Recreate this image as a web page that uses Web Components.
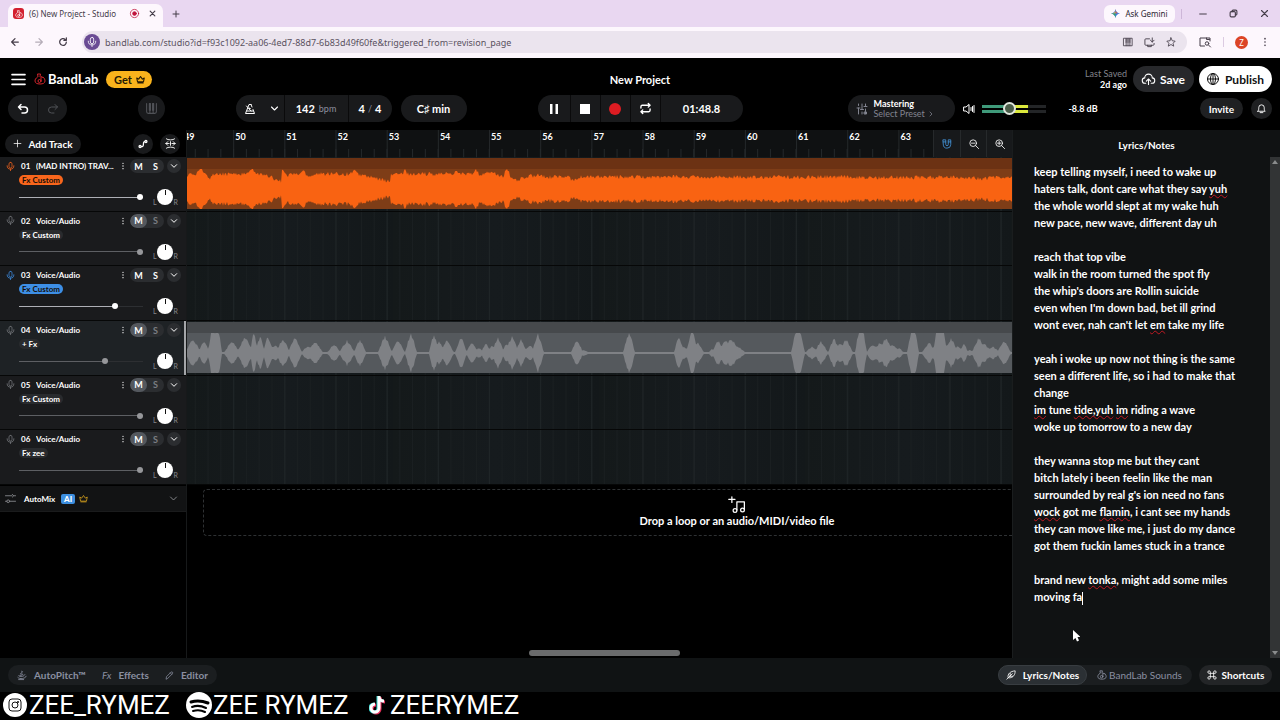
<!DOCTYPE html>
<html lang="en">
<head>
<meta charset="utf-8">
<title>(6) New Project - Studio</title>
<meta name="viewport" content="width=device-width, initial-scale=1">
<style>
  html { background: #000; }
  body { margin: 0; min-height: 100vh; display: flex; flex-direction: column; background: #000; color: #fff;
    font-family: Lato, "Liberation Sans", sans-serif; font-size: 10px; }
  studio-workspace { flex: 1; }
</style>
</head>
<body>
<browser-chrome></browser-chrome>
<studio-header></studio-header>
<studio-workspace></studio-workspace>
<studio-footer></studio-footer>
<social-bar></social-bar>

<script>
const RESET = `<style>
  *, *::before, *::after { box-sizing: border-box; }
  button { font: inherit; color: inherit; background: none; border: 0; padding: 0; margin: 0; display: inline-flex; align-items: center; justify-content: center; white-space: nowrap; }
  a { color: inherit; text-decoration: none; }
  h1, h2, p { margin: 0; font: inherit; }
  input { font: inherit; color: inherit; margin: 0; }
</style>`;

function define(name, html, setup) {
  const template = document.createElement('template');
  customElements.define(name, class extends HTMLElement {
    connectedCallback() {
      if (this.shadowRoot) return;
      template.innerHTML = RESET + (typeof html === 'function' ? html(this) : html);
      this.attachShadow({ mode: 'open' }).append(template.content.cloneNode(true));
      if (setup) setup(this);
    }
  });
}

const ICONS = {
  back: '<path d="M20 12H4m8-8-8 8 8 8"/>',
  forward: '<path d="M4 12h16m-8-8 8 8-8 8"/>',
  reload: '<path d="M20 12a8 8 0 1 1-2.500-5.800M20 2v6h-6"/>',
  mic: '<rect x="8" y="1" width="8" height="15" rx="4"/><path d="M3 10c0 6 3 9 9 9s9-3 9-9M12 19v4"/>',
  close: '<path d="M4 4l16 16M20 4 4 20"/>',
  plus: '<path d="M12 3v18M3 12h18"/>',
  minus: '<path d="M2 12h20"/>',
  restore: '<rect x="3" y="7" width="14" height="14" rx="3"/><path d="M8 7V6a3 3 0 0 1 3-3h7a3 3 0 0 1 3 3v7a3 3 0 0 1-3 3h-1"/>',
  recording: '<circle cx="12" cy="12" r="11"/><circle cx="12" cy="12" r="5" fill="currentColor"/>',
  gemini: '<path d="M12 0Q13.500 10.500 24 12 13.500 13.500 12 24 10.500 13.500 0 12 10.500 10.500 12 0Z" fill="#3b7de9" stroke="none"/><path d="M12 0Q13 10 19 11L12 12Z" fill="#e5533d" stroke="none"/><path d="M0 12Q10 11 11 5L12 12Z" fill="#e9b93b" stroke="none"/><path d="M0 12Q10 13 12 24V12Z" fill="#36a567" stroke="none"/>',
  pianobox: '<rect x="2" y="3" width="20" height="18"/><path d="M7.500 14v7M16.500 14v7M12 14v7"/><path d="M6 3h3v11H6zM10.500 3h3v11h-3zM15 3h3v11h-3z" fill="currentColor" stroke="none"/>',
  install: '<path d="M12 4H4a2 2 0 0 0-2 2v10a2 2 0 0 0 2 2h16a2 2 0 0 0 2-2v-2M8 18v3h8v-3M18 2v9m-4-4 4 4 4-4"/>',
  star: '<path d="m12 2 3 7 7 1-5 5 1.500 7L12 18l-6.500 4L7 15l-5-5 7-1z"/>',
  sidesearch: '<path d="M11 20H2V4h20v6"/><circle cx="16" cy="15" r="3.500"/><path d="m19 18 4 4M15 4v3h6"/>',
  kebab: '<g fill="currentColor" stroke="none"><circle cx="12" cy="4" r="2"/><circle cx="12" cy="12" r="2"/><circle cx="12" cy="20" r="2"/></g>',
  menu: '<path d="M0 3h24M0 12h24M0 21h24"/>',
  bandlab: '<path d="M8 7 7 2h6l-1 5M7 8C3 11 2 13 2 16c0 4 4 6 10 6s10-2 10-6c0-3-1-5-4-8"/><circle cx="11" cy="16" r="3"/><path d="M14 16V7l3 2"/>',
  crown: '<path d="m4 18-2-10 5 3 5-7 5 7 5-3-2 10zM5 21h14"/>',
  undo: '<path d="M8 3 3 8l5 5M3 8h12a6 6 0 0 1 0 12h-5"/>',
  redo: '<path d="m16 3 5 5-5 5M21 8H9a6 6 0 0 0 0 12h5"/>',
  piano: '<path d="M3 3v15a3 3 0 0 0 3 3h12a3 3 0 0 0 3-3V3M9 3v12M15 3v12M9 15v6M15 15v6"/><path d="M8 3h2v12H8zM14 3h2v12h-2z"/>',
  metronome: '<path d="M14 3h-4L3 21h18l-3-8M6 16h12M5 6l9 10M14 3l2 5"/><circle cx="11" cy="11" r="1"/>',
  chevron: '<path d="m4 8 8 8 8-8"/>',
  chevright: '<path d="m8 4 8 8-8 8"/>',
  pause: '<path d="M4 2h5v20H4zM15 2h5v20h-5z" fill="currentColor" stroke="none"/>',
  stop: '<path d="M2 2h20v20H2z" fill="currentColor" stroke="none"/>',
  record: '<circle cx="12" cy="12" r="12" fill="currentColor" stroke="none"/>',
  loop: '<path d="M2 11V8a3 3 0 0 1 3-3h17m-4-4 4 4-4 4M22 13v3a3 3 0 0 1-3 3H2m4 4-4-4 4-4"/>',
  faders: '<path d="M5 2v3M5 10v12M12 2v11M12 18v4M19 2v5M19 12v5M2 10h6M9 13h6M16 7h6"/><path d="M17 18h4v4h-4z" fill="currentColor"/>',
  speaker: '<path d="M2 8h4l6-5v18l-6-5H2zM16 9v6M19 7v10M22 5v14"/>',
  cloud: '<path d="M7 19H6a5 5 0 0 1-1-10 7 7 0 0 1 14 0 5 5 0 0 1-1 10h-1M12 21V11m-4 4 4-4 4 4"/>',
  globe: '<circle cx="12" cy="12" r="11"/><ellipse cx="12" cy="12" rx="5" ry="11"/><path d="M1 12h22M12 1v22"/>',
  bell: '<path d="M4 18h16c-2-2-2-4-2-8a6 6 0 0 0-12 0c0 4 0 6-2 8zM9 21h6"/>',
  automation: '<circle cx="5" cy="18" r="2.500"/><circle cx="19" cy="6" r="2.500"/><path d="M8 18h2c6 0 0-12 6-12"/>',
  fit: '<path d="M3 2c3 3 15 3 18 0M3 22c3-3 15-3 18 0M2 12h7M15 12h7M6 8l-4 4 4 4M18 8l4 4-4 4M12 8v8"/>',
  magnet: '<path d="M3 2h6v11a3 3 0 0 0 6 0V2h6v11a9 9 0 0 1-18 0zM3 7h6M15 7h6"/>',
  zoomout: '<circle cx="10" cy="10" r="8"/><path d="m16 16 7 7M6 10h8"/>',
  zoomin: '<circle cx="10" cy="10" r="8"/><path d="m16 16 7 7M6 10h8M10 6v8"/>',
  automix: '<path d="M1 6h14M19 6h4M1 18h3M10 18h13M16 3l3 3-3 3"/><circle cx="7" cy="18" r="3"/>',
  drop: '<path d="M3-2v9M-2 2h10M11 19V6h12v12"/><circle cx="8" cy="20" r="3"/><circle cx="20" cy="19" r="3"/>',
  autopitch: '<path d="M11 3c4 0 3 3 0 3M8 9c9 0 8 3-1 4M4 14c3 4 15 1 15-3M2 18c4 5 19 3 20-3M4 23h12"/>',
  pencil: '<path d="M3 21l1-6L16 3c3-2 6 1 4 4L8 19zM14 5l4 4"/>',
  feather: '<path d="M2 22 15 9M5 18C3 9 11 3 22 2c0 9-4 17-15 17M10 14V8M9 15h7"/>',
  command: '<path d="M8 8V5a3 3 0 1 0-3 3h14a3 3 0 1 0-3-3v14a3 3 0 1 0 3-3H5a3 3 0 1 0 3 3z"/>',
};
define('ui-icon', el => `<style>
  :host { display: block; flex: none; width: var(--size, 12px); height: var(--size, 12px); }
  svg { display: block; width: 100%; height: 100%; overflow: visible; fill: none; stroke: currentColor; stroke-width: ${el.getAttribute('weight') || 2}; stroke-linecap: round; stroke-linejoin: round; }
</style><svg viewBox="0 0 24 24" aria-hidden="true">${ICONS[el.getAttribute('name')]}</svg>`);

define('browser-chrome', `<style>
  :host { display: block; font-family: "Noto Sans", "Open Sans", sans-serif; color: #453d49; font-size: 8px; }
  .tabs { height: 27px; background: #e9d7f1; display: flex; align-items: flex-end; padding-left: 8px; }
  .tab { width: 155px; height: 23px; background: #fdf7fd; border-radius: 7px 7px 0 0; display: flex; align-items: center; padding: 0 7px 4px 5px; gap: 5px; }
  .fav { width: 11px; height: 11px; border-radius: 3px; background: #d3202f; color: #fff; display: grid; place-items: center; }
  .tab span.t { flex: 1; white-space: nowrap; }
  .rec { color: #c0143c; }
  .new { margin: 0 0 9px 9px; }
  .win { margin-left: auto; align-self: stretch; display: flex; align-items: center; padding-right: 11px; }
  .gem { height: 18px; width: 71px; border-radius: 6px; background: #fdf7fd; gap: 5px; color: #2b2630; }
  .win i { width: 1px; height: 10px; background: #cdb6d8; margin: 0 17px 0 6px; }
  .win .ctl { margin-right: 22px; }
  .win .ctl:last-child { margin: 0; }
  .bar { height: 31px; background: #fdf7fd; display: flex; align-items: center; padding: 0 10px 1px; }
  .nav { margin-right: 14px; }
  .fade { color: #b5adb8; }
  .omni { flex: 1; height: 22px; border-radius: 11px; background: #ebe4ee; display: flex; align-items: center; padding-right: 11px; gap: 11px; }
  .site { width: 16px; height: 16px; border-radius: 50%; background: #6a4b94; color: #fff; display: grid; place-items: center; margin-left: 2px; }
  .omni input { flex: 1; min-width: 0; border: 0; background: none; padding: 0; margin-left: -6px; outline: 0; font-size: 9px; color: #5a525f; }
  .ext { margin-left: 12px; }
  .bar i { width: 1px; height: 10px; background: #dccbe2; margin: 0 11px 0 12px; }
  .user { width: 13px; height: 13px; border-radius: 50%; background: #dc4426; color: #fff; margin-right: 12px; }
</style>
<div class="tabs">
  <div class="tab"><span class="fav"><ui-icon name="bandlab" style="--size:8px"></ui-icon></span><span class="t">(6) New Project - Studio</span>
    <ui-icon class="rec" name="recording" style="--size:9px"></ui-icon><button aria-label="Close tab" style="margin-left:5px"><ui-icon name="close" weight="4" style="--size:7px"></ui-icon></button></div>
  <button class="new" aria-label="New tab"><ui-icon name="plus" weight="3" style="--size:8px"></ui-icon></button>
  <div class="win"><button class="gem"><ui-icon name="gemini" style="--size:9px"></ui-icon>Ask Gemini</button><i></i>
    <button class="ctl" aria-label="Minimise"><ui-icon name="minus" weight="3" style="--size:8px"></ui-icon></button>
    <button class="ctl" aria-label="Restore"><ui-icon name="restore" weight="3" style="--size:9px"></ui-icon></button>
    <button class="ctl" aria-label="Close"><ui-icon name="close" weight="3" style="--size:9px"></ui-icon></button></div>
</div>
<div class="bar">
  <button class="nav" aria-label="Back"><ui-icon name="back" weight="3" style="--size:10px"></ui-icon></button>
  <button class="nav fade" aria-label="Forward"><ui-icon name="forward" weight="3" style="--size:10px"></ui-icon></button>
  <button class="nav" aria-label="Reload"><ui-icon name="reload" weight="3" style="--size:10px"></ui-icon></button>
  <div class="omni"><span class="site"><ui-icon name="mic" style="--size:10px"></ui-icon></span>
    <input aria-label="Address" value="bandlab.com/studio?id=f93c1092-aa06-4ed7-88d7-6b83d49f60fe&amp;triggered_from=revision_page">
    <ui-icon name="pianobox" style="--size:10px"></ui-icon><ui-icon name="install" style="--size:11px"></ui-icon><ui-icon name="star" style="--size:10px"></ui-icon></div>
  <button class="ext" aria-label="Side panel"><ui-icon name="sidesearch" style="--size:12px"></ui-icon></button><i></i>
  <button class="user">Z</button><button aria-label="More"><ui-icon name="kebab" style="--size:10px"></ui-icon></button>
</div>`);

define('studio-header', `<style>
  :host { display: block; padding: 8px 8px; background: #000; font-weight: 700; }
  .top, .tools { display: grid; grid-template-columns: 1fr auto 1fr; align-items: center; height: 26px; }
  .tools { height: 27px; margin-top: 3px; }
  .side { display: flex; align-items: center; min-width: 0; }
  .brand { display: flex; align-items: center; gap: 2px; font-size: 13px; margin-left: 9px; }
  .brand ui-icon { color: #d0252c; }
  .get { height: 17px; width: 46px; border-radius: 9px; background: #f9b31c; color: #241a04; gap: 4px; margin-left: 8px; font-size: 11px; }
  h1 { font-size: 11px; font-weight: 700; }
  .saved { margin-left: auto; text-align: right; font-size: 9px; line-height: 11px; margin-right: 6px; }
  .saved p:first-child { color: #82848c; font-weight: 400; }
  .save, .publish { height: 26px; border-radius: 13px; gap: 5px; font-size: 12px; }
  .save { width: 61px; background: #27282b; margin-right: 5px; }
  .publish { width: 73px; background: #fff; color: #111; gap: 6px; }
  .group { height: 27px; display: flex; background: #191a1c; border-radius: 14px; overflow: hidden; }
  .group > * { border-right: 1px solid #0a0a0b; height: 100%; }
  .group > :last-child { border: 0; }
  .dim { color: #505257; }
  .soft { color: #8d90a0; font-weight: 400; font-size: 9px; }
  .n { font-size: 11px; }
  .master { width: 107px; height: 27px; border-radius: 14px; background: #191a1c; justify-content: flex-start; padding-left: 8px; gap: 6px; text-align: left; line-height: 10px; font-size: 9px; margin-left: 105px; }
  .master small { display: flex; align-items: center; gap: 3px; color: #82848f; font-size: 9px; font-weight: 400; }
  .master ui-icon { color: #82848f; }
  .vol { margin: 0 7px 0 8px; }
  .meter { display: grid; width: 64px; height: 13px; align-items: center; }
  .meter > * { grid-area: 1 / 1; }
  .lv { height: 8px; display: flex; flex-direction: column; justify-content: space-between; }
  .lv::before, .lv::after { content: ""; height: 3px; background: linear-gradient(90deg, #3f9a7a 0 30px, #dbe83c 30px 46px, #232527 46px); }
  .meter input { appearance: none; width: 64px; height: 13px; background: none; outline: 0; }
  .meter input::-webkit-slider-thumb { appearance: none; width: 13px; height: 13px; border-radius: 50%; border: 2px solid #dfe5dc; background: #4a5c48; }
  .db { font-size: 9px; margin-left: 23px; white-space: nowrap; }
  .invite { margin-left: auto; width: 43px; height: 21px; border-radius: 11px; background: #1f2022; }
  .bell { width: 21px; height: 21px; border-radius: 50%; background: #1f2022; margin-left: 8px; }
</style>
<div class="top">
  <div class="side" style="padding-left:4px">
    <button aria-label="Menu"><ui-icon name="menu" weight="3" style="--size:13px"></ui-icon></button>
    <a class="brand" href="#"><ui-icon name="bandlab" style="--size:12px"></ui-icon>BandLab</a>
    <button class="get">Get <ui-icon name="crown" weight="3" style="--size:9px"></ui-icon></button>
  </div>
  <h1>New Project</h1>
  <div class="side">
    <div class="saved"><p>Last Saved</p><p>2d ago</p></div>
    <button class="save"><ui-icon name="cloud" style="--size:13px"></ui-icon>Save</button>
    <button class="publish"><ui-icon name="globe" style="--size:12px"></ui-icon>Publish</button>
  </div>
</div>
<div class="tools">
  <div class="side">
    <div class="group"><button aria-label="Undo" style="width:30px"><ui-icon name="undo" weight="3"></ui-icon></button><button aria-label="Redo" class="dim" style="width:29px"><ui-icon name="redo"></ui-icon></button></div>
    <div class="group dim" style="width:27px;margin-left:71px"><button aria-label="Keyboard" style="width:27px"><ui-icon name="piano" style="--size:13px"></ui-icon></button></div>
    <div class="group" style="margin-left:auto"><button style="width:49px;gap:14px;padding-left:4px" aria-label="Metronome"><ui-icon name="metronome"></ui-icon><ui-icon name="chevron" weight="3" style="--size:9px"></ui-icon></button>
      <button class="n" style="width:64px;gap:4px">142 <span class="soft">bpm</span></button><button class="n" style="width:43px;gap:3px">4 <span class="soft">/</span> 4</button></div>
    <div class="group" style="margin:0 71px 0 9px"><button class="n" style="width:66px">C♯ min</button></div>
  </div>
  <div class="group">
    <button aria-label="Pause" style="width:33px"><ui-icon name="pause" style="--size:12px"></ui-icon></button>
    <button aria-label="Stop" style="width:30px"><ui-icon name="stop" style="--size:12px"></ui-icon></button>
    <button aria-label="Record" style="width:30px;color:#dd1c22"><ui-icon name="record"></ui-icon></button>
    <button aria-label="Loop" style="width:30px"><ui-icon name="loop" weight="3" style="--size:11px"></ui-icon></button>
    <button class="n" style="width:82px">01:48.8</button>
  </div>
  <div class="side">
    <button class="master"><ui-icon name="faders"></ui-icon><span>Mastering<small>Select Preset <ui-icon name="chevright" weight="3" style="--size:6px"></ui-icon></small></span></button>
    <ui-icon class="vol" name="speaker"></ui-icon>
    <div class="meter"><span class="lv"></span><input type="range" value="43" aria-label="Master volume"></div>
    <span class="db">-8.8 dB</span>
    <button class="invite">Invite</button>
    <button class="bell" aria-label="Notifications"><ui-icon name="bell" style="--size:11px"></ui-icon></button>
  </div>
</div>`);

define('track-row', el => {
  const a = n => el.getAttribute(n);
  const muted = el.hasAttribute('muted');
  const selected = el.hasAttribute('selected');
  const v = +a('volume');
  return `<style>
  :host { display: block; min-height: 0; border-bottom: 1px solid #060707; background: ${selected ? '#1e2225' : '#1a1b1d'}; ${selected ? 'box-shadow: inset -2px 0 #a4a6a9;' : ''} font-size: 8px; font-weight: 700; padding: 0 5px 0 6px; }
  .head { height: 18px; display: flex; align-items: center; }
  .mic { color: ${a('tint') || '#77797d'}; margin-right: 6px; }
  .num { width: 15px; }
  .name { width: 80px; margin-right: auto; overflow: hidden; text-overflow: ellipsis; white-space: nowrap; }
  .ms { display: flex; height: 14px; width: 34px; border-radius: 7px; background: #2b2d30; margin: 0 3px 0 3px; overflow: hidden; font-size: 9px; }
  .ms button { width: 17px; border-radius: 7px; }
  .ms button:first-child { background: ${muted ? '#54585e' : 'none'}; }
  .ms button:last-child { color: ${muted ? '#7b7e83' : '#fff'}; }
  .more { width: 14px; height: 14px; border-radius: 50%; background: #2b2d30; }
  .fx-line { height: 10px; display: flex; }
  .fx { height: 10px; border-radius: 5px; padding: 0 3px; margin-left: 13px; line-height: 10px; background: ${a('tint') || '#292b2e'}; color: ${a('tint') ? '#160e08' : '#fff'}; }
  .mix { height: 24px; display: flex; align-items: center; }
  input { appearance: none; width: 124px; height: 8px; margin-left: 13px; background: linear-gradient(${muted ? '#5d5f63' : '#aeb0b6'} 0 0) 0 50% / ${v}% 1px no-repeat, linear-gradient(#2d2f32 0 0) 0 50% / 100% 1px no-repeat; outline: 0; }
  input::-webkit-slider-thumb { appearance: none; width: 6px; height: 6px; border-radius: 50%; background: ${muted ? '#96979a' : '#fff'}; }
  .pan { margin-left: 10px; width: 25px; display: flex; align-items: flex-end; justify-content: space-between; color: #85878a; font-weight: 400; height: 19px; line-height: 9px; font-size: 7px; }
  .knob { width: 16px; height: 16px; border-radius: 50%; background: linear-gradient(#111 0 0) 50% 1px / 1px 5px no-repeat, #fff; align-self: center; }
  </style>
  <div class="head"><ui-icon class="mic" name="mic" style="--size:9px"></ui-icon><span class="num">${a('num')}</span><span class="name">${a('name')}</span>
    <button aria-label="Track options"><ui-icon name="kebab" style="--size:8px"></ui-icon></button>
    <span class="ms"><button aria-pressed="${muted}">M</button><button>S</button></span>
    <button class="more" aria-label="Expand"><ui-icon name="chevron" weight="3" style="--size:8px"></ui-icon></button></div>
  <div class="fx-line"><button class="fx">${a('fx')}</button></div>
  <div class="mix"><input type="range" aria-label="Volume" value="${v}"><span class="pan"><span>L</span><span class="knob" role="slider" aria-label="Pan" aria-valuenow="0"></span><span>R</span></span></div>`;
});

define('track-list', `<style>
  :host { display: flex; flex-direction: column; border-right: 1px solid #17191a; font-weight: 700; }
  .add { height: 27px; display: flex; align-items: center; padding: 0 6px 0 5px; }
  .add button { height: 20px; border-radius: 10px; background: #191a1c; }
  .add button:first-child { width: 76px; gap: 6px; font-size: 10px; margin-right: auto; }
  .add .round { width: 20px; margin-left: 7px; }
  .rows { height: 328px; display: grid; grid-template-columns: minmax(0, 1fr); grid-template-rows: repeat(6, minmax(0, 1fr)); }
  .auto { height: 26px; margin-top: 1px; padding: 0 8px 0 5px; display: flex; align-items: center; background: #121314; font-size: 8px; border-bottom: 1px solid #1a1b1c; }
  .auto b { background: #3d8fe0; border-radius: 2px; line-height: 10px; padding: 0 3px; margin: 0 4px 0 6px; }
  .auto button { margin-left: auto; color: #a7a9ad; }
</style>
<div class="add"><button><ui-icon name="plus" style="--size:9px"></ui-icon>Add Track</button>
  <button class="round" aria-label="Automation"><ui-icon name="automation" weight="3" style="--size:10px"></ui-icon></button>
  <button class="round" aria-label="Fit"><ui-icon name="fit" style="--size:11px"></ui-icon></button></div>
<div class="rows">
  <track-row num="01" name="(MAD INTRO) TRAV..." fx="Fx Custom" tint="#f9661c" volume="100"></track-row>
  <track-row num="02" name="Voice/Audio" fx="Fx Custom" volume="100" muted></track-row>
  <track-row num="03" name="Voice/Audio" fx="Fx Custom" tint="#3d8fe6" volume="79"></track-row>
  <track-row num="04" name="Voice/Audio" fx="+ Fx" volume="70" muted selected></track-row>
  <track-row num="05" name="Voice/Audio" fx="Fx Custom" volume="100" muted></track-row>
  <track-row num="06" name="Voice/Audio" fx="Fx zee" volume="100" muted></track-row>
</div>
<div class="auto"><ui-icon name="automix" style="--size:11px;color:#85878b;margin-right:8px"></ui-icon>AutoMix<b>AI</b><ui-icon name="crown" style="--size:9px;color:#e2a91e"></ui-icon>
  <button aria-label="Expand AutoMix"><ui-icon name="chevron" style="--size:9px"></ui-icon></button></div>`);

/* Envelopes. BEAT: pairs of position and peak height; VOICE: centre, half width and height of each burst. */
const BEAT = [0,14,10,15,13,21,16,17,21,12,24,11,26,15,61,15,64,20,68,17,75,14,83,12,94,8,95,20,97,19,100,12,102,15,113,15,116,19,119,15,123,13,128,15,163,15,167,19,170,15,183,12,203,7,204,15,216,15,218,19,221,15,266,15,270,19,273,15,286,15,289,19,293,14,301,18,316,12,320,21,325,10,333,9,335,12,340,10,343,14,347,12,352,14,360,12,380,12,386,9,393,12,450,12,580,12,660,12,665,11,760,12,790,11,795,10,803,11,810,12,826,11];
const VOICE = [193,6,13,204,4,11,213,3,30,217,3,30,232,6,11,245,6,15,254,2,20,260,3,16,268,3,16,275,5,8,283,5,14,295,5,15,308,5,7,315,6,11,334,5,8,347,6,12,360,4,13,385,5,16,398,5,12,411,4,19,434,3,19,439,4,11,447,5,12,461,4,15,472,4,10,479,4,5,486,3,10,492,4,7,498,4,15,507,4,9,512,5,16,521,4,13,530,5,7,538,4,18,577,4,13,583,5,3,629,4,20,679,3,16,684,4,6,692,4,22,698,4,10,712,2,4,718,4,12,726,6,13,731,7,14,738,6,6,798,5,28,812,5,6,821,5,11,834,4,14,840,5,9,846,5,13,861,4,30,873,5,8,880,6,10,886,5,15,893,5,8,899,3,5,913,4,28,929,5,10,938,3,30,942,3,30,951,5,14,958,4,7,964,2,10,970,3,3,979,5,15,984,6,9,993,5,6,1004,5,12];
function noise(i) { const s = Math.sin(i * 127.1) * 43758.5; return s - Math.floor(s); }
function beatPeak(x) {
  let i = 0;
  while (i < BEAT.length - 4 && BEAT[i + 2] < x) i += 2;
  const t = Math.min(1, (x - BEAT[i]) / (BEAT[i + 2] - BEAT[i]));
  return BEAT[i + 1] + (BEAT[i + 3] - BEAT[i + 1]) * t + noise(x) * 4 - 2;
}
function voicePeak(x) {
  let h = 1;
  for (let i = 0; i < VOICE.length; i += 3) {
    const d = Math.abs(x + 187 - VOICE[i]) / (VOICE[i + 1] + 2);
    if (d < 1) h = Math.max(h, VOICE[i + 2] * (1 - Math.pow(d, 1.3)) * (.85 + noise(x) * .25));
  }
  return h;
}
define('audio-clip', `<style>
  :host { display: block; min-height: 0; margin: 1px 0 2px; width: 826px; background: linear-gradient(var(--head) 0 11px, var(--body) 11px); }
  svg { display: block; width: 826px; height: 51px; }
</style><svg viewBox="0 0 826 51" aria-hidden="true"><path/></svg>`, el => {
  const voice = el.getAttribute('wave') === 'voice', mid = 31;
  const peak = voice ? voicePeak : beatPeak;
  let top = '', bottom = '';
  for (let x = 0; x <= 826; x++) {
    const h = Math.min(20, peak(x));
    top += `L${x} ${(mid - h).toFixed(1)}`;
    bottom = `L${x} ${(mid + h).toFixed(1)}` + bottom;
  }
  const path = el.shadowRoot.querySelector('path');
  path.setAttribute('d', `M0 ${mid}${top}${bottom}Z`);
  path.setAttribute('fill', voice ? '#7f8185' : '#f96312');
});

define('time-line', `<style>
  :host { display: flex; flex-direction: column; overflow: hidden; --bar: calc(870px / 17); font-weight: 700; }
  .ruler { height: 27px; display: flex; justify-content: flex-end; background: #0f1112; }
  .bars { flex: 1; width: 0; overflow: hidden; }
  ol { list-style: none; margin: 0 0 0 -5px; padding: 0; width: 870px; height: 27px; display: grid; grid-template-columns: repeat(17, 1fr); font-size: 9px; line-height: 14px;
    background: linear-gradient(90deg, #24282a 1px, transparent 1px) 0 0 / var(--bar) 100%, linear-gradient(90deg, #24282a 1px, transparent 1px) 0 100% / calc(var(--bar) / 4) 8px repeat-x; }
  li { padding-left: 2px; }
  .zoom { display: flex; }
  .zoom button { width: 26px; background: #17191b; border-left: 1px solid #26292b; }
  .zoom button:first-child { width: 27px; color: #4596dc; }
  .lanes { height: 328px; display: grid; grid-template-rows: repeat(6, minmax(0, 1fr)); background:
    linear-gradient(90deg, #1f2527 1px, transparent 1px) -5px 0 / var(--bar) 100%,
    linear-gradient(90deg, #1a1f21 1px, transparent 1px) -5px 0 / calc(var(--bar) / 4) 100%,
    linear-gradient(90deg, #14191a, #161b1e, #13181a) 0 0 / 206px 100%; }
  .lane { border-bottom: 1px solid #060707; min-height: 0; }
  .drop { margin: 4px -259px 0 16px; height: 47px; border: 1px dashed #2e3133; border-radius: 4px; display: flex; flex-direction: column; align-items: center; justify-content: center; font-size: 11px; line-height: 14px; gap: 1px; }
  .scroll { margin: auto 0 2px 342px; width: 151px; height: 6px; border-radius: 3px; background: #6a6b6c; }
</style>
<div class="ruler"><div class="bars"><ol>${Array.from({ length: 15 }, (_, i) => `<li>${49 + i}</li>`).join('')}</ol></div>
  <div class="zoom"><button aria-label="Snap"><ui-icon name="magnet" style="--size:10px"></ui-icon></button><button aria-label="Zoom out"><ui-icon name="zoomout" style="--size:10px"></ui-icon></button><button aria-label="Zoom in"><ui-icon name="zoomin" style="--size:10px"></ui-icon></button></div></div>
<div class="lanes">
  <div class="lane"><audio-clip wave="beat" style="--head:#6c3213;--body:#7e3d17"></audio-clip></div>
  <div class="lane"></div><div class="lane"></div>
  <div class="lane"><audio-clip wave="voice" style="--head:#46494c;--body:#55595d"></audio-clip></div>
  <div class="lane"></div><div class="lane"></div>
</div>
<div class="drop"><ui-icon name="drop" style="--size:15px"></ui-icon><span>Drop a loop or an audio/MIDI/video file</span></div>
<div class="scroll"></div>`);

/* [word] marks a word that the spelling check underlines. */
const LYRICS = `keep telling myself, i need to wake up
haters talk, dont care what they say [yuh]
the whole world slept at my wake huh
new pace, new wave, different day uh

reach that top vibe
walk in the room turned the spot fly
the whip's doors are Rollin suicide
even when I'm down bad, bet ill grind
wont ever, nah can't let [em] take my life

yeah i woke up now not thing is the same
seen a different life, so i had to make that change
[im] tune [tide,yuh] [im] riding a wave
woke up tomorrow to a new day

they wanna stop me but they cant
bitch lately i been feelin like the man
surrounded by real g's ion need no fans
[wock] got me [flamin], i cant see my hands
they can move like me, i just do my dance
got them fuckin lames stuck in a trance

brand new [tonka], might add some miles
moving fa|`;
const lyricLines = LYRICS.split('\n').map(line =>
  `<div>${line.replace(/\[(.+?)\]/g, '<u>$1</u>').replace('|', '<i></i>') || '<br>'}</div>`).join('');

define('lyrics-panel', `<style>
  :host { display: flex; flex-direction: column; background: #101213; border-left: 1px solid #1a1d1e; position: relative; }
  h2 { text-align: center; font-size: 10px; font-weight: 700; line-height: 30px; height: 27px; }
  .body { flex: 1; display: flex; }
  .text { flex: 1; padding: 6px 20px 0 21px; font-size: 11px; line-height: 17px; outline: 0; font-weight: 700; }
  u { text-decoration: underline wavy #c01822 1px; text-underline-offset: 1px; text-decoration-skip-ink: none; }
  i { display: inline-block; width: 1px; height: 13px; background: #fff; vertical-align: middle; }
  .bar { width: 10px; background: #323435; display: flex; flex-direction: column; justify-content: space-between; align-items: center; padding: 3px 0; }
  .bar::before, .bar::after { content: ""; border: solid transparent; border-width: 0 3px; }
  .bar::before { border-bottom: 4px solid #8a8c8d; }
  .bar::after { border-top: 4px solid #8a8c8d; }
  .cursor { position: absolute; left: 60px; top: 500px; width: 7px; height: 12px; }
</style>
<h2 id="h">Lyrics/Notes</h2>
<div class="body"><div class="text" role="textbox" aria-multiline="true" aria-labelledby="h" contenteditable="true" spellcheck="false">${lyricLines}</div><div class="bar"></div></div>
<svg class="cursor" viewBox="0 0 14 24" aria-hidden="true"><path d="M0 0v20l5-4 3 7 4-2-3-7h6z" fill="#fff"/></svg>`);

define('studio-workspace', `<style>
  :host { display: grid; grid-template-columns: 187px minmax(0, 1fr) 268px; }
</style><track-list></track-list><time-line></time-line><lyrics-panel></lyrics-panel>`);

define('studio-footer', `<style>
  :host { display: flex; align-items: center; height: 34px; background: #101314; padding: 0 8px; font-size: 10px; font-weight: 700; color: #8a8fa0; }
  .pill { height: 20px; border-radius: 10px; background: #1b1e20; display: flex; }
  .pill button { gap: 7px; height: 20px; }
  .tools { padding: 0 1px; }
  .tools button { padding: 0 8px; }
  .views { margin: 0 7px 0 auto; }
  .pill .on { background: #2b3034; color: #fff; border-radius: 10px; width: 89px; border: 1px solid #383d41; }
  .short { width: 73px; height: 20px; border-radius: 10px; background: #232527; color: #fff; gap: 5px; }
  em { font-size: 10px; font-weight: 400; }
</style>
<div class="pill tools"><button><ui-icon name="autopitch" style="--size:10px"></ui-icon>AutoPitch™</button><button><em>Fx</em>Effects</button><button><ui-icon name="pencil" style="--size:9px"></ui-icon>Editor</button></div>
<div class="pill views"><button class="on"><ui-icon name="feather" style="--size:10px"></ui-icon>Lyrics/Notes</button><button style="width:105px;gap:2px;font-weight:400"><ui-icon name="bandlab" style="--size:10px"></ui-icon>BandLab Sounds</button></div>
<button class="short"><ui-icon name="command" style="--size:10px"></ui-icon>Shortcuts</button>`);

define('social-bar', `<style>
  :host { display: flex; align-items: center; height: 28px; padding: 0 0 2px 3px; background: #000; font-family: Roboto, sans-serif; font-size: 26px; line-height: 26px; box-sizing: border-box; }
  svg { flex: none; display: block; }
  a { display: flex; align-items: center; height: 26px; }
</style>
<a href="#" style="gap:2px;width:183px"><svg width="24" height="24" viewBox="0 0 24 24"><circle cx="12" cy="12" r="12" fill="#fff"/><g fill="none" stroke="#111"><rect x="6" y="6" width="12" height="12" rx="3"/><circle cx="12" cy="12" r="3"/></g><circle cx="15" cy="9" r="1" fill="#111"/></svg>ZEE_RYMEZ</a>
<a href="#" style="gap:0;width:183px"><svg width="27" height="27" viewBox="0 0 27 27"><circle cx="13" cy="13" r="13" fill="#fff"/><g fill="none" stroke="#000" stroke-linecap="round"><path d="M5 10c6-2 12-1 17 1" stroke-width="3"/><path d="M6 15c5-2 10-1 14 1" stroke-width="2"/><path d="M7 19c4-1 8-1 12 1" stroke-width="2"/></g></svg>ZEE RYMEZ</a>
<a href="#" style="gap:4px"><svg width="17" height="20" viewBox="0 0 17 20"><g fill="none" stroke-width="3"><path d="M6 9a4 4 0 1 0 4 4V1c0 3 2 5 5 5" stroke="#e8305a" transform="translate(1 1)"/><path d="M6 9a4 4 0 1 0 4 4V1c0 3 2 5 5 5" stroke="#35d6cf" transform="translate(-1 0)"/><path d="M6 9a4 4 0 1 0 4 4V1c0 3 2 5 5 5" stroke="#fff"/></g></svg>ZEERYMEZ</a>`);
</script>
</body>
</html>
